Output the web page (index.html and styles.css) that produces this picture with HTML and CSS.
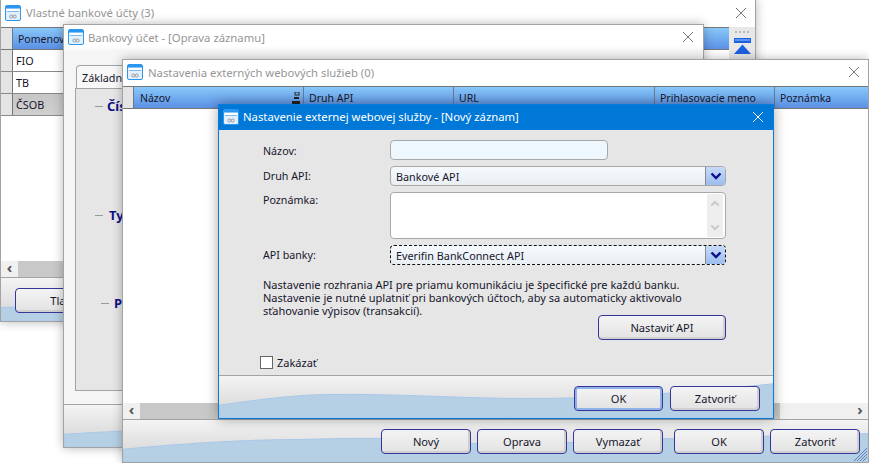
FILE: index.html
```html
<!DOCTYPE html>
<html lang="sk">
<head>
<meta charset="utf-8">
<title>Nastavenie externej webovej služby</title>
<link rel="stylesheet" href="styles.css">
</head>
<body>
<svg class="defs" width="0" height="0" aria-hidden="true">
  <symbol id="winicon" viewBox="0 0 16 16">
    <rect x="0.5" y="0.5" width="15" height="15" rx="1.5" fill="#e4f0fb" stroke="#2a96ee"/>
    <rect x="1" y="1" width="14" height="2.500" fill="#2a96ee"/>
    <rect x="2" y="4" width="12" height="2" fill="#fff"/>
    <rect x="2" y="6" width="12" height="1" fill="#7db9ee"/>
    <circle cx="6.300" cy="11.500" r="1.500" fill="none" stroke="#8f9aa6"/>
    <circle cx="9.700" cy="11.500" r="1.500" fill="none" stroke="#8f9aa6"/>
  </symbol>
  <symbol id="closex" viewBox="0 0 12 12">
    <path d="M1 1 L11 11 M11 1 L1 11" fill="none" stroke="currentColor" stroke-width="1"/>
  </symbol>
  <symbol id="chev" viewBox="0 0 12 8">
    <path d="M1.5 1.5 L6 6 L10.5 1.5" fill="none" stroke="currentColor" stroke-width="2.4"/>
  </symbol>
</svg>

<section class="win win-a">
  <header class="title"><svg class="icon"><use href="#winicon"/></svg><span>Vlastné bankové účty (3)</span><svg class="close"><use href="#closex"/></svg></header>
  <div class="body body-a">
    <div class="grid-a">
      <div class="thead"><div class="th th-stub-a"></div><div class="th th-grow">Pomenovanie</div></div>
      <div class="row"><div class="stub-a"></div><div class="cell">FIO</div></div>
      <div class="row"><div class="stub-a"></div><div class="cell">TB</div></div>
      <div class="row row-sel"><div class="stub-a"></div><div class="cell">ČSOB</div></div>
    </div>
    <aside class="side">
      <div class="dots"><i></i><i></i><i></i><i></i></div>
      <svg class="top-ico" width="17" height="17" viewBox="0 0 17 17"><rect width="17" height="5" fill="#1c5fe0"/><rect x="1" y="1" width="15" height="2" fill="#5a93f0"/><path d="M8.5 6.500 L17 16 H0 Z" fill="#1c5fe0"/></svg>
    </aside>
  </div>
  <div class="hscroll"><span class="sarrow">‹</span><span class="track"></span></div>
  <footer class="foot foot-a">
    <svg class="wave" viewBox="0 0 756 45" preserveAspectRatio="none"><path d="M0 31 C200 22 500 20 756 14 V45 H0 Z" fill="#b5d0e5" stroke="#a9c6ea"/></svg>
    <button class="btn btn-tla">Tlačiť</button>
  </footer>
</section>

<section class="win win-b">
  <header class="title"><svg class="icon"><use href="#winicon"/></svg><span>Bankový účet - [Oprava záznamu]</span><svg class="close"><use href="#closex"/></svg></header>
  <div class="body body-b">
    <div class="tab">Základné</div>
    <div class="panel">
      <div class="legend legend-1"><i></i><b>Číslo účtu</b></div>
      <div class="legend legend-2"><i></i><b>Typ účtu</b></div>
      <div class="legend legend-3"><i></i><b>Prístup</b></div>
    </div>
  </div>
  <footer class="foot foot-b">
    <svg class="wave" viewBox="0 0 640 43" preserveAspectRatio="none"><path d="M0 30 C150 20 400 18 640 14 V43 H0 Z" fill="#b5d0e5" stroke="#a9c6ea"/></svg>
  </footer>
</section>

<section class="win win-c">
  <header class="title"><svg class="icon"><use href="#winicon"/></svg><span>Nastavenia externých webových služieb (0)</span><svg class="close"><use href="#closex"/></svg></header>
  <div class="thead thead-c">
    <div class="th c0"></div>
    <div class="th c1">Názov<svg class="sort" width="8" height="12" viewBox="0 0 8 12"><rect x="3" y="0" width="4" height="3" fill="none" stroke="#222"/><rect x="2" y="5" width="5" height="2" fill="#222"/><rect x="0" y="9" width="8" height="3" fill="#222"/></svg></div>
    <div class="th c2">Druh API</div>
    <div class="th c3">URL</div>
    <div class="th c4">Prihlasovacie meno</div>
    <div class="th c5">Poznámka</div>
  </div>
  <div class="body body-c"></div>
  <div class="hscroll hscroll-c"><span class="sarrow">‹</span><span class="track track-c"></span><span class="sarrow sarrow-r">›</span></div>
  <footer class="foot foot-c">
    <svg class="wave" viewBox="0 0 746 43" preserveAspectRatio="none"><path d="M0 30 C60 24 120 20 178 20 C240 18 300 18 350 24 C420 26 500 20 578 18 C640 17 700 15 746 14 V43 H0 Z" fill="#b5d0e5" stroke="#a9c6ea"/></svg>
    <div class="btns btns-c">
      <button class="btn">Nový</button>
      <button class="btn">Oprava</button>
      <button class="btn">Vymazať</button>
      <button class="btn btn-gap">OK</button>
      <button class="btn">Zatvoriť</button>
    </div>
    <svg class="grip" width="14" height="14" viewBox="0 0 14 14"><path d="M14 1 L1 14 M14 4 L4 14 M14 7 L7 14 M14 10 L10 14" stroke="#5a7fb0" fill="none"/></svg>
  </footer>
</section>

<section class="win win-d">
  <header class="title title-active"><svg class="icon"><use href="#winicon"/></svg><span>Nastavenie externej webovej služby - [Nový záznam]</span><svg class="close"><use href="#closex"/></svg></header>
  <div class="form">
    <div class="fields">
      <label class="lbl lbl-low">Názov:</label>
      <div class="input input-name"></div>
      <label class="lbl">Druh API:</label>
      <div class="input select"><span>Bankové API</span><span class="drop"><svg width="12" height="8"><use href="#chev"/></svg></span></div>
      <label class="lbl lbl-top">Poznámka:</label>
      <div class="input memo"><div class="vbar"><svg width="10" height="7"><use href="#chev" class="flip"/></svg><svg width="10" height="7"><use href="#chev"/></svg></div></div>
      <label class="lbl">API banky:</label>
      <div class="input select dashed"><span>Everifin BankConnect API</span><span class="drop"><svg width="12" height="8"><use href="#chev"/></svg></span></div>
    </div>
    <p class="note">Nastavenie rozhrania API pre priamu komunikáciu je špecifické pre každú banku.<br>Nastavenie je nutné uplatniť pri bankových účtoch, aby sa automaticky aktivovalo<br>sťahovanie výpisov (transakcií).</p>
    <div class="api-row"><button class="btn btn-api">Nastaviť API</button></div>
    <div class="check-row"><span class="check"></span><span>Zakázať</span></div>
  </div>
  <footer class="foot foot-d">
    <svg class="wave" viewBox="0 0 555 43" preserveAspectRatio="none"><path d="M0 30 C40 24 80 19 110 19 C170 18 230 22 290 23 C390 24 480 16 555 8 V43 H0 Z" fill="#b5d0e5" stroke="#a9c6ea"/></svg>
    <div class="btns btns-d">
      <button class="btn btn-default">OK</button>
      <button class="btn btn-close">Zatvoriť</button>
    </div>
  </footer>
</section>
</body>
</html>
```

FILE: styles.css
```css
* { box-sizing: border-box; }
html, body { margin: 0; height: 100%; }
body {
  position: relative;
  width: 869px;
  height: 463px;
  overflow: hidden;
  background: #fff;
  font-family: "Noto Sans", sans-serif;
  font-size: 11px;
  color: #16162c;
}
.defs { position: absolute; }

.win {
  position: absolute;
  display: flex;
  flex-direction: column;
  background: #fff;
  border: 1px solid #a3a3a3;
  box-shadow: 0 0 10px rgba(0, 0, 0, .28);
  overflow: hidden;
}
.win-a { left: 0; top: -1px; width: 756px; height: 323px; }
.win-b { left: 63px; top: 24px; width: 641px; height: 424px; }
.win-c { left: 122px; top: 59px; width: 747px; height: 404px; }
.win-d {
  left: 218px; top: 104px; width: 556px; height: 315px;
  background: #e6e6e6;
  border-color: #0a7bd8;
  box-shadow: 0 0 12px rgba(0, 0, 0, .35);
}

.title {
  flex: none;
  display: flex;
  align-items: center;
  height: 26px;
  padding: 0 8px 2px 4px;
  gap: 5px;
  font-size: 11.3px;
  color: #969696;
  background: #fff;
}
.title span { flex: 1; white-space: nowrap; }
.win-a .title { height: 27px; }
.win-b .title { background: linear-gradient(#fff 80%, #f5f5f5); gap: 4px; padding-right: 9px; }
.title-active { background: #0078d7; color: #fff; height: 25px; padding-right: 9px; gap: 4px; }
.icon { width: 16px; height: 16px; flex: none; }
.close { width: 12px; height: 12px; flex: none; color: #777; }
.title-active .close { color: #fff; }

.body { flex: 1; min-height: 0; }
.body-a { display: flex; background: #fff; }
.grid-a { flex: 1; }
.side { width: 26px; background: #e8e8e8; height: 36px; padding: 4px 5px 0; display: flex; flex-direction: column; gap: 5px; align-items: center; }
.dots { display: flex; gap: 2px; }
.dots i { width: 2px; height: 2px; background: #b8b8b8; }
.top-ico { flex: none; }

.thead {
  display: flex;
  height: 23px;
  border-top: 1px solid #777;
  border-bottom: 1px solid #777;
  background: linear-gradient(#88c8fa, #5b90e4);
}
.th {
  display: flex;
  align-items: center;
  padding-left: 5px;
  border-right: 1px solid #6c7890;
  font-size: 10.5px;
  white-space: nowrap;
  position: relative;
}
.th-stub-a { width: 12px; background: #e4e4e4; padding: 0; }
.th-grow { flex: 1; border-right: 0; }
.row { display: flex; height: 22px; border-bottom: 1px solid #8a8a8a; align-items: center; width: 100%; }
.stub-a { width: 12px; height: 100%; background: #e4e4e4; border-right: 1px solid #777; }
.cell { padding-left: 3px; font-size: 10.8px; }
.row-sel { background: linear-gradient(#c6c6c6, #d0d0d0); }

.hscroll { flex: none; display: flex; height: 16px; background: #f0f0f0; }
.sarrow { width: 17px; text-align: center; font-size: 15px; line-height: 13px; font-weight: 700; color: #555; }
.sarrow-r { margin-left: auto; width: 16px; }
.track { flex: 1; background: #c8c8c8; }
.track-c { flex: none; width: 640px; }

.foot {
  position: relative;
  flex: none;
  height: 43px;
  border-top: 1px solid #a3a3a3;
  background: linear-gradient(#f4f4f4, #d2d2d2);
}
.foot-a { height: 44px; }
.wave { position: absolute; left: 0; top: 0; width: 100%; height: 100%; }

.btn {
  position: relative;
  height: 25px;
  width: 90px;
  padding: 0;
  border: 1px solid #35359a;
  border-radius: 4px;
  background: linear-gradient(#f4f4f4, #e2e2e2);
  box-shadow: inset -2px -2px 0 #d0d0d0;
  font: 11.1px "Noto Sans", sans-serif;
  color: #16162c;
}
.btn-tla { width: 98px; margin: 10px 0 0 14px; }
.btn-default { box-shadow: inset 0 0 0 2px #8fb2ea; width: 89px; }
.btn-close { width: 90px; }
.btn-api { width: 128px; }

.btns { position: relative; display: flex; }
.btns-c { gap: 6px; padding: 9px 0 0 258px; }
.btn-gap { margin-left: 5px; }
.btns-d { gap: 7px; padding: 10px 0 0 355px; }
.grip { position: absolute; right: 1px; bottom: 1px; }

.body-b { position: relative; background: #f5f5f5; padding: 14px 0 13px 11px; display: flex; flex-direction: column; }
.tab {
  width: 70px; height: 23px;
  padding: 4px 0 0 5px;
  margin-left: 1px;
  border: 1px solid #a3a3a3;
  border-bottom: 0;
  border-radius: 4px 4px 0 0;
  background: #f8f8f8;
  font-size: 10.8px;
}
.panel { flex: 1; background: #e6e6e6; border: 1px solid #a3a3a3; position: relative; }
.legend { position: absolute; display: flex; align-items: center; gap: 4px; font-size: 13px; color: #10108a; white-space: nowrap; }
.legend i { width: 8px; height: 1px; background: #999; }
.legend-1 { left: 19px; top: 8px; }
.legend-2 { left: 19px; top: 117px; gap: 6px; }
.legend-3 { left: 25px; top: 205px; gap: 5px; }

.thead-c { flex: none; height: 23px; }
.c0 { width: 11px; background: #e4e4e4; padding: 0; }
.c1 { width: 170px; padding-left: 6px; }
.sort { position: absolute; right: 3px; top: 5px; }
.c2 { width: 150px; }
.c3 { width: 201px; }
.c4 { width: 120px; }
.c5 { flex: 1; border-right: 0; }
.body-c { background: #fff; }

.form { flex: 1; padding: 10px 0 0 41px; min-height: 0; }
.fields {
  display: grid;
  grid-template-columns: 127px 336px;
  grid-template-rows: 20px 20px 47px 20px;
  row-gap: 6px;
  padding-left: 3px;
}
.lbl { align-self: center; font-size: 10.7px; }
.lbl-low { margin-top: 2px; }
.lbl-top { align-self: start; margin-top: 1px; }
.input {
  border: 1px solid #a8a8a8;
  border-radius: 4px;
  background: #fff;
  font-size: 10.8px;
}
.input-name { width: 218px; background: #eef6fe; }
.select {
  display: flex;
  align-items: center;
  justify-content: space-between;
  padding-left: 5px;
  background: linear-gradient(#f6fafe, #e9eef3);
}
.drop {
  width: 20px;
  height: 100%;
  display: flex;
  align-items: center;
  justify-content: center;
  border-left: 1px solid #888;
  border-radius: 0 3px 3px 0;
  background: linear-gradient(#c6dbf8, #9dbdf0);
  color: #10108a;
}
.memo { display: flex; justify-content: flex-end; padding: 1px 2px; }
.vbar {
  width: 16px;
  background: #eee;
  color: #c8c8c8;
  display: flex;
  flex-direction: column;
  justify-content: space-between;
  align-items: center;
  padding: 6px 0;
}
.flip { transform: rotate(180deg); transform-origin: 5px 3.5px; }
.dashed { border: 1px dashed #111; }
.note { margin: 13px 0 0 3px; font-size: 11px; line-height: 13px; white-space: nowrap; }
.api-row { display: flex; justify-content: flex-end; width: 466px; margin-top: -2px; }
.check-row { display: flex; align-items: center; gap: 4px; margin-top: 15px; font-size: 11px; }
.check { width: 13px; height: 13px; border: 1px solid #666; background: #fff; }
.foot-d { border-top-color: #a3a3a3; }
```
